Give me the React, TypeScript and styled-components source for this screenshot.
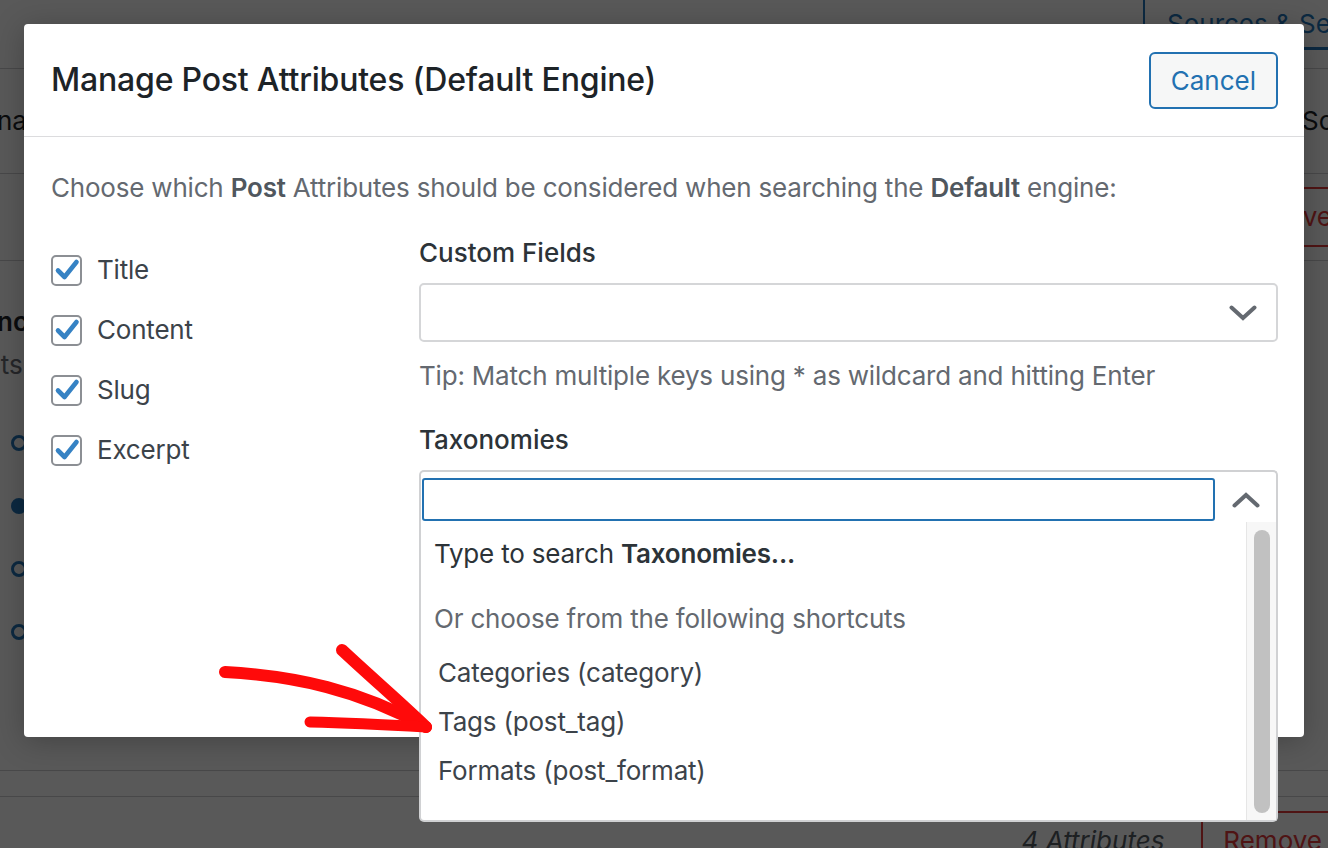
import React from 'react'
import styled, { createGlobalStyle } from 'styled-components'

const GlobalStyle = createGlobalStyle`
  html, body {
    margin: 0;
    padding: 0;
  }

  body {
    font-family: Inter, 'Noto Sans', sans-serif;
    background: #555;
  }

  * {
    box-sizing: border-box;
  }
`

const Screen = styled.div`
  position: relative;
  width: 1328px;
  height: 848px;
  overflow: hidden;
`

/* the admin page that sits behind the dimmed overlay */

const AdminPage = styled.div`
  display: flex;
  flex-direction: column;
  width: 100%;
  height: 100%;
  background: #f0f0f1;
  color: #1d2327;
  font-size: 26px;
  line-height: 36px;
`

const AdminRow = styled.div<{ $height?: number; $align?: string }>`
  display: flex;
  align-items: ${(p) => p.$align || 'center'};
  justify-content: space-between;
  flex: ${(p) => (p.$height ? `0 0 ${p.$height}px` : '1')};
  border-bottom: 1px solid #c3c4c7;
`

const BottomRow = styled.div`
  display: flex;
  align-items: flex-start;
  justify-content: flex-end;
  gap: 37px;
  flex: 1;
  padding-top: 14px;
`

const SourcesTab = styled.div`
  align-self: flex-start;
  margin-left: auto;
  width: 185px;
  height: 50px;
  padding: 6px 0 0 22px;
  white-space: nowrap;
  color: #2271b1;
  border-left: 2px solid #2271b1;
  border-bottom: 3px solid #2271b1;
`

const EdgeText = styled.span<{ $shift?: number; $gap?: number; $bold?: boolean; $muted?: boolean }>`
  margin: ${(p) => p.$gap || 0}px 0 0 ${(p) => p.$shift || 0}px;
  white-space: nowrap;
  font-weight: ${(p) => (p.$bold ? 600 : 400)};
  color: ${(p) => (p.$muted ? '#646970' : '#1d2327')};
`

const RightEdge = styled.span`
  width: 26px;
  white-space: nowrap;
`

const OutlineRemove = styled.span<{ $pull: number }>`
  margin-right: -${(p) => p.$pull}px;
  padding: 10px 20px;
  border: 2px solid #d63638;
  border-radius: 4px;
  color: #d63638;
  white-space: nowrap;
`

const AttrCount = styled.span`
  margin-top: 12px;
  font-style: italic;
  color: #50575e;
`

const SideStack = styled.div`
  align-self: stretch;
  display: flex;
  flex-direction: column;
  padding-top: 43px;
`

const Dots = styled.div`
  display: flex;
  flex-direction: column;
  gap: 47px;
  margin: 52px 0 0 11px;
`

const Dot = styled.span<{ $filled?: boolean }>`
  width: 16px;
  height: 16px;
  border-radius: 50%;
  border: 3px solid #2271b1;
  background: ${(p) => (p.$filled ? '#2271b1' : 'transparent')};
`

const Overlay = styled.div`
  position: absolute;
  inset: 0;
  background: rgba(0, 0, 0, 0.63);
`

/* modal */

const Modal = styled.section`
  position: absolute;
  left: 24px;
  top: 24px;
  width: 1280px;
  height: 713px;
  display: flex;
  flex-direction: column;
  background: #fff;
  border-radius: 4px;
  box-shadow: 0 4px 30px rgba(0, 0, 0, 0.25);
  font-size: 26px;
  line-height: 36px;
  letter-spacing: -0.2px;
  color: #3c434a;
`

const ModalHeader = styled.header`
  display: flex;
  align-items: center;
  justify-content: space-between;
  height: 113px;
  padding: 0 26px 0 27px;
  border-bottom: 1px solid #dcdcde;
`

const Title = styled.h1`
  margin: 0 0 1px;
  font-size: 32px;
  font-weight: 500;
  color: #1d2327;
  letter-spacing: -0.2px;
`

const CancelButton = styled.button`
  height: 57px;
  padding: 0 20px;
  border: 2px solid #2271b1;
  border-radius: 6px;
  background: #f6f7f7;
  color: #2271b1;
  font-family: inherit;
  font-size: 26px;
  cursor: pointer;
`

const ModalBody = styled.div`
  padding: 33px 26px 0 27px;
`

const Intro = styled.p`
  margin: 0;
  color: #646970;

  b {
    font-weight: 600;
    color: #50575e;
  }
`

const Columns = styled.div`
  display: grid;
  grid-template-columns: 368px 1fr;
  margin-top: 29px;
`

const CheckList = styled.div`
  display: flex;
  flex-direction: column;
  padding-top: 5px;
`

const CheckRow = styled.label`
  display: flex;
  align-items: center;
  gap: 15px;
  height: 60px;
  color: #3c434a;
`

const CheckBox = styled.span`
  display: flex;
  align-items: center;
  justify-content: center;
  width: 31px;
  height: 31px;
  border: 2px solid #8c8f94;
  border-radius: 5px;
  background: #fff;
`

const Fields = styled.div`
  display: flex;
  flex-direction: column;
`

const FieldLabel = styled.h3<{ $gap?: number }>`
  margin: ${(p) => p.$gap || 0}px 0 12px;
  font-size: 26px;
  line-height: 36px;
  font-weight: 500;
  letter-spacing: 0;
  color: #2c3338;
`

const SelectBox = styled.div`
  display: flex;
  align-items: center;
  justify-content: flex-end;
  height: 59px;
  padding-right: 19px;
  border: 2px solid #d5d6d8;
  border-radius: 5px;
`

const Tip = styled.p`
  margin: 16px 0 0;
  color: #646970;
`

const Combo = styled.div`
  position: relative;
`

const ComboControl = styled.div`
  display: flex;
  align-items: flex-start;
  height: 52px;
  padding: 6px 0 0 1px;
  border: 2px solid #d0d1d3;
  border-bottom: none;
  border-radius: 5px 5px 0 0;
`

const SearchInput = styled.input`
  width: 793px;
  height: 43px;
  border: 2px solid #2271b1;
  border-radius: 3px;
  outline: none;
  font-family: inherit;
  font-size: 24px;
`

const ComboToggle = styled.span`
  flex: 1;
  display: flex;
  align-items: center;
  justify-content: center;
  height: 43px;
`

const Dropdown = styled.div`
  position: absolute;
  top: 100%;
  left: 0;
  right: 0;
  height: 300px;
  display: grid;
  grid-template-columns: 1fr 30px;
  background: #fff;
  border: 2px solid #d0d1d3;
  border-top: none;
  border-radius: 0 0 5px 5px;
  z-index: 2;
`

const DropdownList = styled.div`
  display: flex;
  flex-direction: column;
  padding: 14px 0 0 13px;
  color: #2c3338;

  b {
    font-weight: 600;
  }
`

const Hint = styled.div<{ $muted?: boolean; $gap?: number }>`
  margin-top: ${(p) => p.$gap || 0}px;
  color: ${(p) => (p.$muted ? '#646970' : '#2c3338')};
`

const Options = styled.ul`
  list-style: none;
  margin: 18px 0 0;
  padding: 0 0 0 4px;
`

const Option = styled.li`
  height: 49px;
  line-height: 36px;
  color: #3c434a;
`

const ScrollTrack = styled.div`
  display: flex;
  justify-content: center;
  padding: 8px 0 7px;
  background: #f7f7f7;
  border-left: 1px solid #e6e6e6;
`

const ScrollThumb = styled.span`
  width: 16px;
  border-radius: 8px;
  background: #c1c1c1;
`

const Arrow = styled.svg`
  position: absolute;
  left: 200px;
  top: 630px;
  overflow: visible;
  z-index: 5;
`

const Check = () => (
  <svg width="26" height="26" viewBox="0 0 26 26">
    <path
      d="M4 13.5 L10.5 20 L22.5 5"
      fill="none"
      stroke="#3582c4"
      strokeWidth="4.6"
      strokeLinecap="round"
      strokeLinejoin="round"
    />
  </svg>
)

const Chevron = ({ up }: { up?: boolean }) => (
  <svg width="28" height="16" viewBox="0 0 28 16">
    <path
      d={up ? 'M2.5 13.5 L14 3 L25.5 13.5' : 'M2.5 2.5 L14 13 L25.5 2.5'}
      fill="none"
      stroke="#646970"
      strokeWidth="4"
      strokeLinecap="round"
    />
  </svg>
)

const attributes = ['Title', 'Content', 'Slug', 'Excerpt']
const shortcuts = ['Categories (category)', 'Tags (post_tag)', 'Formats (post_format)']

const App = () => {
  return (
    <>
      <GlobalStyle />
      <Screen>
        <AdminPage>
          <AdminRow $height={69}>
            <SourcesTab>Sources &amp; Settings</SourcesTab>
          </AdminRow>
          <AdminRow $height={105}>
            <EdgeText $shift={-3}>name</EdgeText>
            <RightEdge>Sources</RightEdge>
          </AdminRow>
          <AdminRow $height={87}>
            <span />
            <OutlineRemove $pull={26}>Remove</OutlineRemove>
          </AdminRow>
          <AdminRow $height={510} $align="flex-start">
            <SideStack>
              <EdgeText $shift={-3} $bold>
                nce
              </EdgeText>
              <EdgeText $shift={-45} $gap={7} $muted>
                Posts
              </EdgeText>
              <Dots>
                <Dot />
                <Dot $filled />
                <Dot />
                <Dot />
              </Dots>
            </SideStack>
          </AdminRow>
          <AdminRow $height={26} />
          <BottomRow>
            <AttrCount>4 Attributes</AttrCount>
            <OutlineRemove $pull={16}>Remove</OutlineRemove>
          </BottomRow>
        </AdminPage>

        <Overlay />

        <Modal>
          <ModalHeader>
            <Title>Manage Post Attributes (Default Engine)</Title>
            <CancelButton>Cancel</CancelButton>
          </ModalHeader>
          <ModalBody>
            <Intro>
              Choose which <b>Post</b> Attributes should be considered when searching the{' '}
              <b>Default</b> engine:
            </Intro>
            <Columns>
              <CheckList>
                {attributes.map((name) => (
                  <CheckRow key={name}>
                    <CheckBox>
                      <Check />
                    </CheckBox>
                    {name}
                  </CheckRow>
                ))}
              </CheckList>
              <Fields>
                <FieldLabel>Custom Fields</FieldLabel>
                <SelectBox>
                  <Chevron />
                </SelectBox>
                <Tip>Tip: Match multiple keys using * as wildcard and hitting Enter</Tip>
                <FieldLabel $gap={28}>Taxonomies</FieldLabel>
                <Combo>
                  <ComboControl>
                    <SearchInput />
                    <ComboToggle>
                      <Chevron up />
                    </ComboToggle>
                  </ComboControl>
                  <Dropdown>
                    <DropdownList>
                      <Hint>
                        Type to search <b>Taxonomies...</b>
                      </Hint>
                      <Hint $muted $gap={29}>
                        Or choose from the following shortcuts
                      </Hint>
                      <Options>
                        {shortcuts.map((s) => (
                          <Option key={s}>{s}</Option>
                        ))}
                      </Options>
                    </DropdownList>
                    <ScrollTrack>
                      <ScrollThumb />
                    </ScrollTrack>
                  </Dropdown>
                </Combo>
              </Fields>
            </Columns>
          </ModalBody>
        </Modal>

        <Arrow width="260" height="120" viewBox="0 0 260 120">
          <g fill="none" stroke="#ff0a0a" strokeLinecap="round" strokeLinejoin="round">
            <path d="M25 42 C 95 46, 160 60, 226 97" strokeWidth="12" />
            <path d="M142 20 C 172 48, 200 72, 226 97" strokeWidth="12" />
            <path d="M110 92 C 150 93, 190 95, 226 97" strokeWidth="11" />
          </g>
        </Arrow>
      </Screen>
    </>
  )
}

export default App
